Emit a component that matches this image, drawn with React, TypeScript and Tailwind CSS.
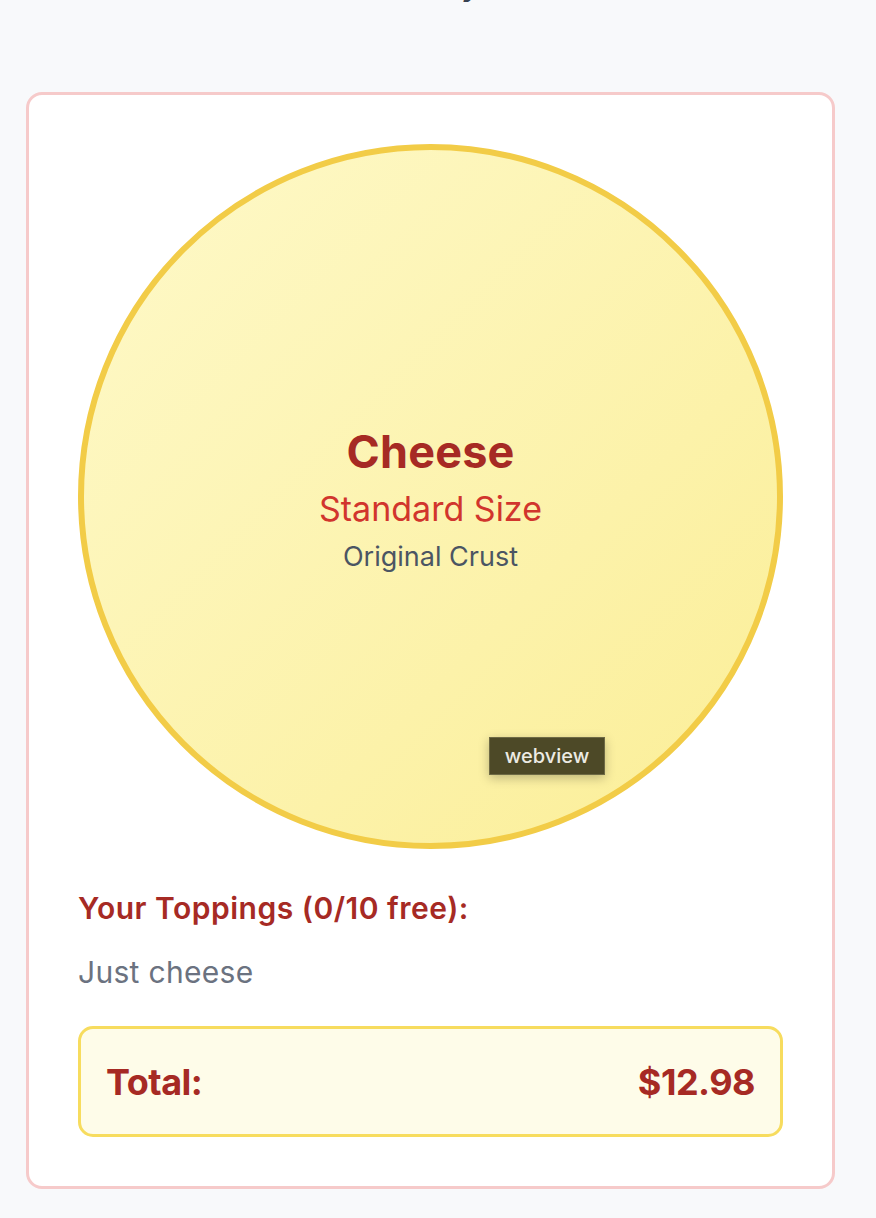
import React from "react";

export default function App() {
  return (
    <div
      className="min-h-[1218px] overflow-hidden bg-[#f8f9fb] pl-[26px]"
      style={{ fontFamily: "Inter, 'Noto Sans', sans-serif" }}
    >
      <h2 className="-mt-[30px] h-[30px] pl-[314px] text-[30px] font-semibold leading-none text-[#374151]">
        Summary
      </h2>
      <div className="relative mt-[92px] w-[809px] rounded-[16px] border-[3px] border-[#f6caca] bg-white p-[49px]">
        <div className="flex aspect-square w-full items-center justify-center rounded-full border-[6px] border-[#f2cc47] bg-gradient-to-br from-[#fef9c9] to-[#fbee96]">
          <div className="flex flex-col items-center pt-[9px]">
            <div className="text-[45px] font-bold leading-[54px] tracking-[0.2px] text-[#a62a24]">
              Cheese
            </div>
            <div className="mt-[6px] text-[34px] leading-[48px] text-[#d1352d]">
              Standard Size
            </div>
            <div className="mt-[3px] text-[27px] leading-[42px] text-[#4b5563]">
              Original Crust
            </div>
          </div>
        </div>

        <div className="mt-[38px] text-[30px] font-semibold leading-[42px] tracking-[0.5px] text-[#a62a24]">
          Your Toppings (0/10 free):
        </div>
        <div className="mt-[22px] text-[30px] leading-[42px] tracking-[0.3px] text-[#6b7280]">
          Just cheese
        </div>

        <div className="mt-[33px] flex h-[111px] items-center justify-between rounded-[15px] border-[3px] border-[#f7dc5e] bg-[#fefce9] px-[25px]">
          <span className="text-[36px] font-bold leading-[48px] tracking-[-0.5px] text-[#a62a24]">
            Total:
          </span>
          <span className="text-[36px] font-bold leading-[48px] tracking-[-0.5px] text-[#a62a24]">
            $12.98
          </span>
        </div>

        <div className="absolute left-[460px] top-[642px] flex h-[38px] w-[116px] items-center justify-center border border-[#6e6a45] bg-[#4d4927] text-[20px] font-medium text-[#ecebe3] shadow-[0_3px_10px_rgba(0,0,0,0.25)]">
          webview
        </div>
      </div>
    </div>
  );
}
